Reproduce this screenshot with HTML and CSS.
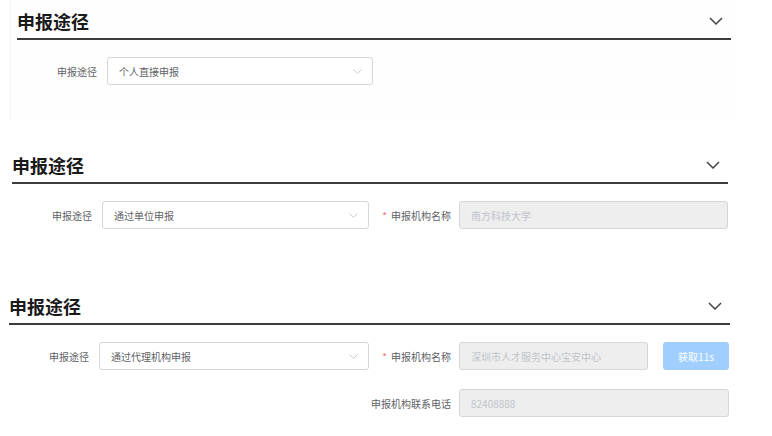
FILE: index.html
```html
<!DOCTYPE html>
<html lang="zh-CN">
<head>
<meta charset="utf-8">
<title>申报途径</title>
<link rel="stylesheet" href="styles.css">
</head>
<body>
<section class="panel p1">
  <div class="header">
    <h2 class="title">申报途径</h2>
    <svg class="hchev" width="14" height="8" viewBox="0 0 14 8"><path d="M1 1 L7 7 L13 1" fill="none" stroke="#444" stroke-width="1.5"/></svg>
  </div>
  <div class="row">
    <span class="label">申报途径</span>
    <div class="select s1"><span>个人直接申报</span><svg class="schev" width="9" height="5" viewBox="0 0 9 5"><path d="M0.5 0.5 L4.5 4.5 L8.5 0.5" fill="none" stroke="#c8cbd0" stroke-width="1"/></svg></div>
  </div>
</section>

<section class="panel p2">
  <div class="header">
    <h2 class="title">申报途径</h2>
    <svg class="hchev" width="14" height="8" viewBox="0 0 14 8"><path d="M1 1 L7 7 L13 1" fill="none" stroke="#444" stroke-width="1.5"/></svg>
  </div>
  <div class="row">
    <span class="label">申报途径</span>
    <div class="select s2"><span>通过单位申报</span><svg class="schev" width="9" height="5" viewBox="0 0 9 5"><path d="M0.5 0.5 L4.5 4.5 L8.5 0.5" fill="none" stroke="#c8cbd0" stroke-width="1"/></svg></div>
    <span class="label2"><i class="req">*</i>申报机构名称</span>
    <div class="input wide">南方科技大学</div>
  </div>
</section>

<section class="panel p3">
  <div class="header">
    <h2 class="title">申报途径</h2>
    <svg class="hchev" width="14" height="8" viewBox="0 0 14 8"><path d="M1 1 L7 7 L13 1" fill="none" stroke="#444" stroke-width="1.5"/></svg>
  </div>
  <div class="row">
    <span class="label">申报途径</span>
    <div class="select s3"><span>通过代理机构申报</span><svg class="schev" width="9" height="5" viewBox="0 0 9 5"><path d="M0.5 0.5 L4.5 4.5 L8.5 0.5" fill="none" stroke="#c8cbd0" stroke-width="1"/></svg></div>
    <span class="label2"><i class="req">*</i>申报机构名称</span>
    <div class="input narrow">深圳市人才服务中心宝安中心</div>
    <button class="btn">获取11s</button>
  </div>
  <div class="row row2">
    <span class="label2">申报机构联系电话</span>
    <div class="input phone">82408888</div>
  </div>
</section>
</body>
</html>
```

FILE: styles.css
```css
html, body {
  margin: 0;
  padding: 0;
  background: #ffffff;
}
body {
  width: 772px;
  height: 436px;
  overflow: hidden;
  font-family: "Noto Sans CJK SC", "Noto Sans", sans-serif;
  color: #606266;
}
.panel {
  display: flex;
  flex-direction: column;
}
.p1 {
  padding: 10px 0 35px 6px;
  margin-left: 10px;
  border-left: 1px solid #f6f6f6;
  background: #fefefe;
  width: 719px;
}
.p2 {
  margin-top: 34px;
  padding-left: 12px;
}
.p3 {
  margin-top: 66px;
  padding-left: 9px;
}
.header {
  height: 28px;
  display: flex;
  align-items: center;
  justify-content: space-between;
  border-bottom: 2px solid #3c3c3c;
  box-sizing: content-box;
}
.p1 .header { width: 714px; }
.p2 .header { width: 716px; }
.p3 .header { width: 721px; }
.title {
  margin: 0 0 6px 0;
  font-size: 18px;
  line-height: 24px;
  font-weight: 700;
  color: #1a1a1a;
}
.hchev {
  margin-right: 8px;
  margin-top: -6px;
}
.row {
  display: flex;
  align-items: center;
  height: 28px;
  margin-top: 17px;
  font-size: 10px;
}
.row2 {
  margin-top: 19px;
  padding-left: 360px;
}
.label {
  width: 80px;
  margin-right: 10px;
  text-align: right;
  color: #606266;
}
.select {
  height: 28px;
  box-sizing: border-box;
  border: 1px solid #d4d7dc;
  border-radius: 3px;
  background: #fff;
  display: flex;
  align-items: center;
  justify-content: space-between;
  padding: 0 10px 0 11px;
  color: #606266;
}
.s1 { width: 266px; }
.s2 { width: 267px; }
.s3 { width: 270px; }
.label2 {
  width: 82px;
  margin-right: 8px;
  text-align: right;
  color: #606266;
  white-space: nowrap;
}
.req {
  font-style: normal;
  color: #f56c6c;
  margin-right: 4px;
}
.input {
  height: 28px;
  box-sizing: border-box;
  border: 1px solid #d6d6d6;
  border-radius: 3px;
  background: #eeeeee;
  color: #c0c4cc;
  display: flex;
  align-items: center;
  padding: 0 11px;
}
.wide { width: 269px; }
.narrow { width: 189px; }
.phone { width: 270px; }
.btn {
  margin-left: 15px;
  width: 66px;
  height: 28px;
  border: none;
  border-radius: 3px;
  background: #a0cfff;
  color: #ffffff;
  font-family: "Noto Sans CJK SC", "Noto Sans", sans-serif;
  font-size: 10px;
  padding: 0;
}
```
